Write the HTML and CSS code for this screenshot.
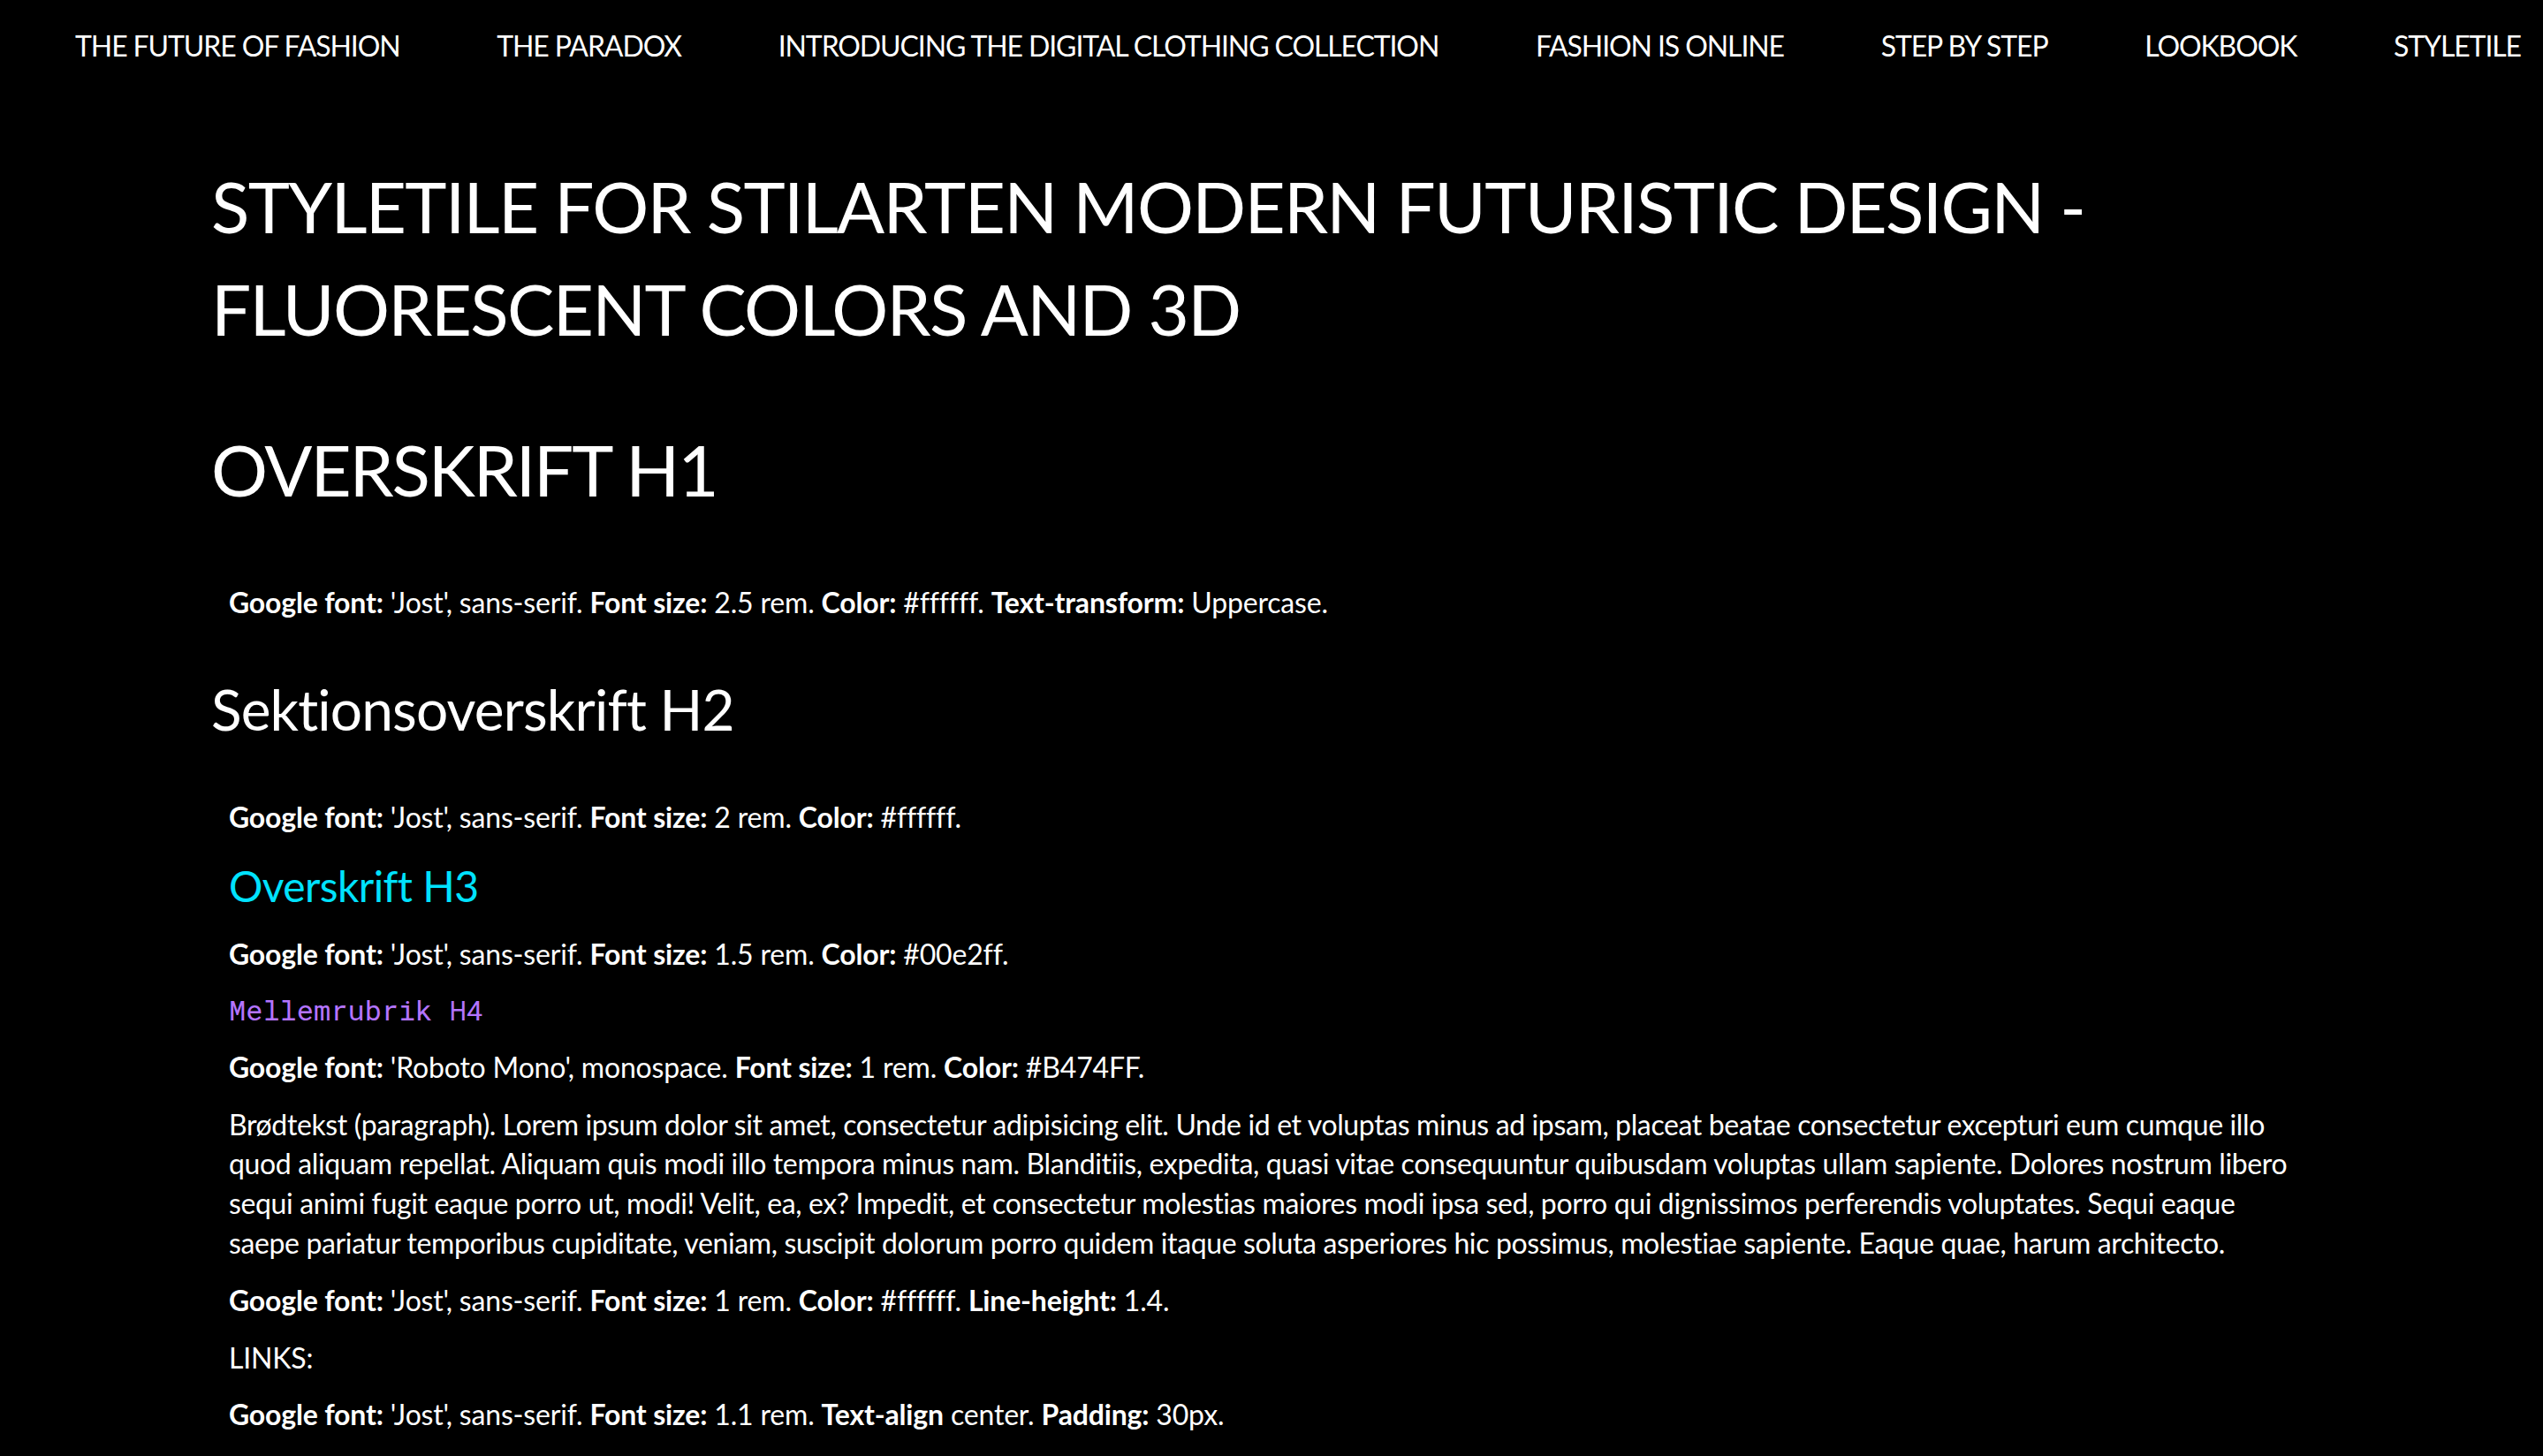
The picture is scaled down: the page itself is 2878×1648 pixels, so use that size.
FILE: index.html
```html
<!DOCTYPE html>
<html lang="da">
<head>
<meta charset="utf-8">
<title>Styletile</title>
<link rel="stylesheet" href="styles.css">
</head>
<body>
<header class="site-header">
  <nav class="site-nav">
    <ul class="nav-list">
      <li><a class="nav-link" href="#">THE FUTURE OF FASHION</a></li>
      <li><a class="nav-link" href="#">THE PARADOX</a></li>
      <li><a class="nav-link" href="#">INTRODUCING THE DIGITAL CLOTHING COLLECTION</a></li>
      <li><a class="nav-link" href="#">FASHION IS ONLINE</a></li>
      <li><a class="nav-link" href="#">STEP BY STEP</a></li>
      <li><a class="nav-link" href="#">LOOKBOOK</a></li>
      <li><a class="nav-link" href="#">STYLETILE</a></li>
    </ul>
  </nav>
</header>
<main class="container">
  <h1 class="page-title">Styletile for Stilarten Modern Futuristic Design - Fluorescent colors and 3D</h1>
  <section class="tile">
    <h1 class="demo-h1">Overskrift H1</h1>
    <p class="info info-h1"><b>Google font:</b> 'Jost', sans-serif. <b>Font size:</b> 2.5 rem. <b>Color:</b> #ffffff. <b>Text-transform:</b> Uppercase.</p>
    <h2 class="demo-h2">Sektionsoverskrift H2</h2>
    <p class="info info-h2"><b>Google font:</b> 'Jost', sans-serif. <b>Font size:</b> 2 rem. <b>Color:</b> #ffffff.</p>
    <h3 class="demo-h3">Overskrift H3</h3>
    <p class="info info-h3"><b>Google font:</b> 'Jost', sans-serif. <b>Font size:</b> 1.5 rem. <b>Color:</b> #00e2ff.</p>
    <h4 class="demo-h4">Mellemrubrik H4</h4>
    <p class="info info-h4"><b>Google font:</b> 'Roboto Mono', monospace. <b>Font size:</b> 1 rem. <b>Color:</b> #B474FF.</p>
    <p class="body-text">Brødtekst (paragraph). Lorem ipsum dolor sit amet, consectetur adipisicing elit. Unde id et voluptas minus ad ipsam, placeat beatae consectetur excepturi eum cumque illo quod aliquam repellat. Aliquam quis modi illo tempora minus nam. Blanditiis, expedita, quasi vitae consequuntur quibusdam voluptas ullam sapiente. Dolores nostrum libero sequi animi fugit eaque porro ut, modi! Velit, ea, ex? Impedit, et consectetur molestias maiores modi ipsa sed, porro qui dignissimos perferendis voluptates. Sequi eaque saepe pariatur temporibus cupiditate, veniam, suscipit dolorum porro quidem itaque soluta asperiores hic possimus, molestiae sapiente. Eaque quae, harum architecto.</p>
    <p class="info info-after"><b>Google font:</b> 'Jost', sans-serif. <b>Font size:</b> 1 rem. <b>Color:</b> #ffffff. <b>Line-height:</b> 1.4.</p>
    <p class="info info-links">LINKS:</p>
    <p class="info info-last"><b>Google font:</b> 'Jost', sans-serif. <b>Font size:</b> 1.1 rem. <b>Text-align</b> center. <b>Padding:</b> 30px.</p>
  </section>
</main>
</body>
</html>
```
FILE: styles.css
```css
html {
  background: #000;
}

body {
  margin: 0;
  background: #000;
  color: #ffffff;
  font-family: "Lato", "Liberation Sans", sans-serif;
  font-size: 32px;
  line-height: 1.4;
  letter-spacing: -0.37px;
}

/* Navigation */
.site-nav {
  padding: 30px 25px 0 85px;
}

.nav-list {
  list-style: none;
  margin: 0;
  padding: 0;
  display: flex;
  justify-content: space-between;
}

.nav-link {
  color: #ffffff;
  text-decoration: none;
  font-size: 32px;
  letter-spacing: -1.1px;
  white-space: nowrap;
}

/* Content */
.container {
  max-width: 2400px;
  margin: 0 auto;
}

.page-title,
.demo-h1 {
  font-size: 80px;
  line-height: 116px;
  font-weight: 400;
  text-transform: uppercase;
  letter-spacing: -1.9px;
  margin: 0;
}

.page-title {
  margin-top: 100px;
  letter-spacing: -1.7px;
}

.demo-h1 {
  margin-top: 66px;
  letter-spacing: -2.1px;
}

.demo-h2 {
  font-size: 64px;
  line-height: 89.6px;
  font-weight: 400;
  letter-spacing: -0.86px;
  margin: 53px 0 0;
}

.demo-h3 {
  font-size: 48px;
  line-height: 67.2px;
  font-weight: 400;
  color: #00e2ff;
  letter-spacing: -0.58px;
  margin: 21px 0 0;
  padding: 0 20px;
}

.demo-h4 {
  font-family: "Roboto Mono", "Liberation Mono", monospace;
  font-size: 32px;
  line-height: 44.8px;
  font-weight: 400;
  color: #B474FF;
  letter-spacing: 0;
  margin: 18px 0 0;
  padding: 0 20px;
}

.info,
.body-text {
  margin: 20px 0 0;
  padding: 0 20px;
}

.info {
  letter-spacing: -0.17px;
}

.info b {
  font-weight: 700;
}

.info-h1 {
  margin-top: 71px;
}

.info-h2 {
  margin-top: 56px;
}

.info-h3 {
  margin-top: 22px;
}

.info-h4 {
  margin-top: 20px;
}

.body-text {
  margin-top: 20px;
  padding-right: 36px;
}

.info-after {
  margin-top: 20px;
}

.info-links {
  margin-top: 20px;
}

.info-last {
  margin-top: 20px;
}
```
